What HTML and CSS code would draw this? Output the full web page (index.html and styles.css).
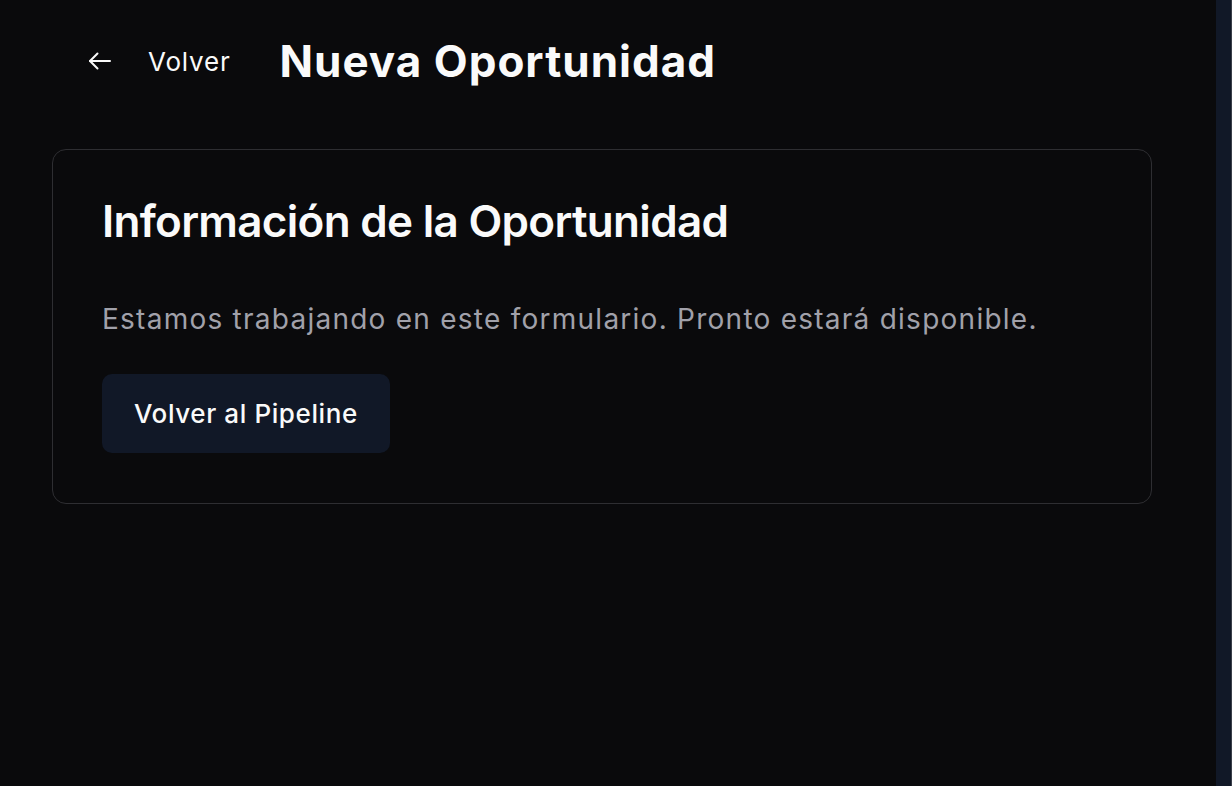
FILE: index.html
```html
<!DOCTYPE html>
<html lang="es">
<head>
<meta charset="utf-8">
<title>Nueva Oportunidad</title>
<link rel="stylesheet" href="styles.css">
</head>
<body>
<div class="app">
  <main class="main">
    <header class="header">
      <a class="back" href="#">
        <svg class="back-icon" viewBox="0 0 24 24" width="24" height="24" fill="none" stroke="currentColor" stroke-width="2" stroke-linecap="round" stroke-linejoin="round"><path d="M22 12H2"/><path d="M9.5 4.5L2 12l7.5 7.5"/></svg>
        <span>Volver</span>
      </a>
      <h1 class="page-title">Nueva Oportunidad</h1>
    </header>
    <section class="card">
      <h2 class="card-title">Información de la Oportunidad</h2>
      <p class="card-text">Estamos trabajando en este formulario. Pronto estará disponible.</p>
      <button class="btn" type="button">Volver al Pipeline</button>
    </section>
  </main>
  <aside class="rail"></aside>
</div>
</body>
</html>
```
FILE: styles.css
```css
* { box-sizing: border-box; }
html, body { margin: 0; height: 100%; }
body {
  background: #0a0a0c;
  color: #fafafa;
  font-family: Inter, "Noto Sans", sans-serif;
}
.app { display: flex; height: 100vh; }
.main { flex: 1; padding: 21px 64px 0 52px; }
.rail { width: 16px; background: #111827; border-right: 1px solid #3a3f4a; }
.header { display: flex; align-items: center; height: 80px; }
.back {
  display: flex; align-items: center; gap: 36px;
  padding-left: 36px;
  color: #fafafa; text-decoration: none;
  font-size: 26px; font-weight: 400; letter-spacing: 0.8px;
}
.back-icon { display: block; }
.page-title {
  margin: 0 0 0 49px;
  font-size: 44px; font-weight: 700; letter-spacing: 1px;
}
.card {
  margin-top: 48px;
  border: 1px solid #2e2e32;
  border-radius: 14px;
  padding: 45px 49px 50px;
}
.card-title {
  margin: 0;
  font-size: 44px; font-weight: 600; letter-spacing: -0.7px; line-height: 1.2;
}
.card-text {
  margin: 52px 0 0;
  font-size: 28px; color: #a1a1aa; line-height: 1.4; letter-spacing: 1.25px;
}
.btn {
  margin-top: 35px;
  height: 79px; padding: 0 32px;
  background: #111827; color: #fafafa;
  border: 0; border-radius: 10px;
  font-family: inherit; font-size: 26px; font-weight: 500; letter-spacing: 0.6px;
}
```
